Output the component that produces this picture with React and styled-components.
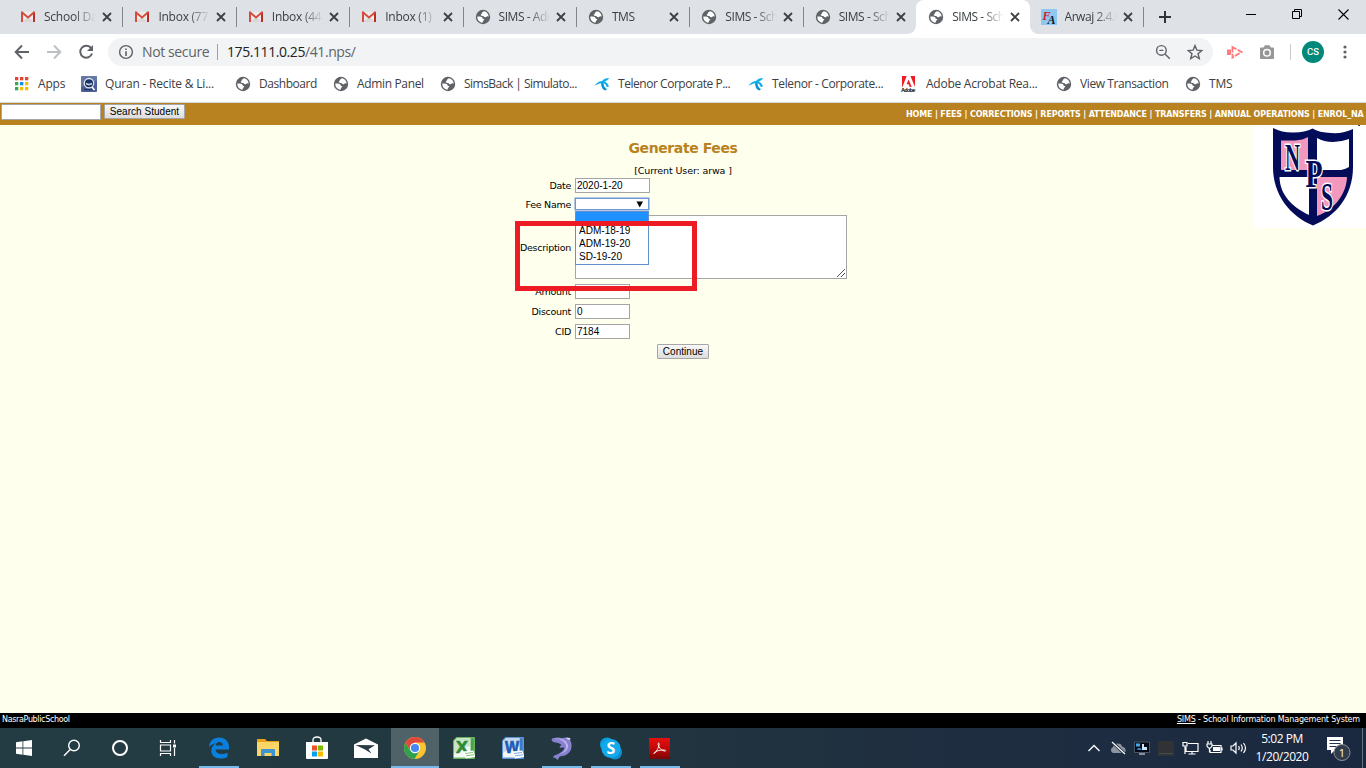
import React from 'react';
import styled, { createGlobalStyle, css } from 'styled-components';

const GlobalStyle = createGlobalStyle`
  * { box-sizing: border-box; }
  body { margin: 0; overflow: hidden; }
`;

const ui = '"Open Sans", "Noto Sans", sans-serif';
const verdana = 'Verdana, "DejaVu Sans", sans-serif';
const arial = '"Liberation Sans", Arial, sans-serif';

const Screen = styled.div`
  width: 1366px;
  height: 768px;
  display: flex;
  flex-direction: column;
  overflow: hidden;
  position: relative;
  background: #ffffee;
`;

/* ---------- tab strip ---------- */
const TabStrip = styled.div`
  height: 34px;
  flex: none;
  display: flex;
  padding-left: 9px;
  background: #dee1e6;
`;
const Tab = styled.div`
  width: 113.4px;
  flex: none;
  height: 34px;
  display: flex;
  align-items: center;
  padding: 0 10px 0 ${p => p.$pad}px;
  position: relative;
  ${p => p.$active ? css`
    background: #fff;
    border-radius: 8px 8px 0 0;
    &::before, &::after {
      content: '';
      position: absolute;
      bottom: 0;
      width: 8px;
      height: 8px;
    }
    &::before { left: -8px; background: radial-gradient(circle at 0 0, transparent 7.5px, #fff 8px); }
    &::after { right: -8px; background: radial-gradient(circle at 100% 0, transparent 7.5px, #fff 8px); }
  ` : ''}
`;
const TabSeparator = styled.i`
  position: absolute;
  right: -1px;
  top: 7px;
  width: 1px;
  height: 20px;
  background: #80868b;
`;
const TabTitle = styled.span`
  width: 52px;
  margin-left: 8px;
  overflow: hidden;
  white-space: nowrap;
  font: 12px/18px ${ui};
  letter-spacing: ${p => p.$ls || 0}px;
  color: #3c4043;
  -webkit-mask-image: linear-gradient(90deg, #000 58%, transparent 100%);
  mask-image: linear-gradient(90deg, #000 58%, transparent 100%);
`;
const TabClose = styled.svg`
  margin-left: 6px;
  flex: none;
`;
const IconBox = styled.span`
  width: 16px;
  height: 16px;
  flex: none;
  display: flex;
  align-items: center;
  justify-content: center;
`;
const NewTab = styled.svg`
  margin: 10px 0 0 15px;
  flex: none;
`;
const WindowButtons = styled.div`
  margin-left: auto;
  display: flex;
  align-items: flex-start;
  gap: 36px;
  padding: 9px 17px 0 0;
`;

/* ---------- toolbar ---------- */
const Toolbar = styled.div`
  height: 36px;
  flex: none;
  display: flex;
  align-items: center;
  background: #fff;
  padding-left: 14px;
`;
const NavIcons = styled.div`
  display: flex;
  gap: 16px;
  width: 94px;
`;
const Omnibox = styled.div`
  width: 1105px;
  height: 28px;
  border-radius: 14px;
  background: #f1f3f4;
  display: flex;
  align-items: center;
  padding: 0 10px 0 10px;
  font: 14px/20px ${ui};
  color: #5f6368;
`;
const Secure = styled.span`
  width: 68px;
  margin-left: 8px;
  white-space: nowrap;
  letter-spacing: -0.38px;
`;
const Bar = styled.i`
  width: 1px;
  height: 16px;
  margin: 0 9px 0 7px;
  background: #9aa0a6;
`;
const Url = styled.span`
  flex: 1;
  letter-spacing: -0.42px;
  b { font-weight: 400; color: #202124; }
`;
const OmniIcons = styled.span`
  display: flex;
  gap: 16px;
`;
const Extensions = styled.div`
  display: flex;
  align-items: center;
  padding-left: 13px;
  gap: 15px;
`;
const ExtDivider = styled.i`
  width: 1px;
  height: 16px;
  margin-right: -4px;
  background: #c6c9cd;
`;
const Avatar = styled.span`
  width: 22px;
  height: 22px;
  border-radius: 50%;
  background: #00897b;
  color: #fff;
  font: 500 9.5px/22px Roboto, sans-serif;
  text-align: center;
  margin-right: 4px;
`;

/* ---------- bookmarks ---------- */
const Bookmarks = styled.div`
  height: 33px;
  flex: none;
  display: flex;
  background: #fff;
  border-bottom: 1px solid #d5d8dc;
  padding: 0 0 4px 14px;
`;
const Bookmark = styled.div`
  width: ${p => p.$w}px;
  flex: none;
  display: flex;
  align-items: center;
  white-space: nowrap;
  font: 12px/18px ${ui};
  letter-spacing: ${p => p.$ls || 0}px;
  color: #3c4043;
  gap: ${p => p.$gap || 8}px;
`;

/* ---------- SIMS page ---------- */
const MenuBar = styled.div`
  height: 22px;
  flex: none;
  display: flex;
  background: #b98220;
  padding: 1px 0 0 1px;
`;
const Field = styled.div`
  width: ${p => p.$w}px;
  height: ${p => p.$h || 15}px;
  border: 1px solid #a5a5a5;
  background: #fff;
  padding: 0 1px;
  font: 10px/13px ${arial};
  color: #000;
`;
const Button = styled.button`
  width: ${p => p.$w}px;
  height: 15px;
  padding: 0;
  border: 1px solid #a6a6a6;
  border-radius: 1px;
  background: linear-gradient(#f8f8f8, #dddddd);
  font: 10px/13px ${arial};
  letter-spacing: ${p => p.$ls}px;
  color: #000;
`;
const SearchArea = styled.div`
  display: flex;
  gap: 3px;
`;
const MainMenu = styled.div`
  width: 460px;
  margin-left: auto;
  overflow: hidden;
  white-space: nowrap;
  padding-top: 4px;
  font: bold 8px/13px ${verdana};
  letter-spacing: -0.15px;
  color: #fff;
`;
const Page = styled.main`
  flex: 1;
  position: relative;
  padding-top: 14px;
`;
const School = styled.svg`
  position: absolute;
  right: 0;
  top: 0;
`;
const Title = styled.h1`
  margin: 0;
  text-align: center;
  font: bold 14px/18px ${verdana};
  letter-spacing: -0.4px;
  color: #b98220;
`;
const CurrentUser = styled.div`
  text-align: center;
  font: 9.5px/13px ${verdana};
  letter-spacing: -0.12px;
  margin-top: 7px;
`;
const Form = styled.div`
  display: grid;
  grid-template-columns: 51px 272px;
  grid-template-rows: 15px 12px 64px 15px 15px 15px;
  column-gap: 4px;
  row-gap: 5px;
  padding: 1px 0 0 520px;
`;
const Label = styled.label`
  align-self: center;
  justify-self: end;
  white-space: nowrap;
  font: 9.5px/13px ${verdana};
  letter-spacing: -0.28px;
`;
const SelectWrap = styled.div`
  position: relative;
  width: 74px;
`;
const SelectBox = styled.div`
  height: 12px;
  border: 1px solid #6d97d8;
  box-shadow: 0 0 0 0.5px #6d97d8;
  background: #fff;
  display: flex;
  justify-content: flex-end;
  align-items: center;
  padding-right: 4px;
`;
const Options = styled.div`
  position: absolute;
  z-index: 2;
  top: 13px;
  left: 0;
  width: 74px;
  height: 54px;
  border: 1px solid #6391cf;
  background: #fff;
  font: 10px/13px ${arial};
  letter-spacing: 0.02px;
`;
const Option = styled.div`
  height: 13px;
  padding-left: 3px;
  line-height: 12px;
  background: ${p => p.$on ? '#1e90ff' : '#fff'};
`;
const TextArea = styled.div`
  width: 272px;
  height: 64px;
  border: 1px solid #a5a5a5;
  background: #fff;
  display: flex;
  justify-content: flex-end;
  align-items: flex-end;
`;
const Submit = styled.div`
  display: flex;
  justify-content: center;
  padding-top: 5px;
`;
const Highlight = styled.div`
  position: absolute;
  z-index: 3;
  left: 515px;
  top: 96px;
  width: 182px;
  height: 70px;
  border: 5px solid #ed1c24;
`;
const Footer = styled.footer`
  height: 15px;
  flex: none;
  display: flex;
  justify-content: space-between;
  background: #000;
  color: #fff;
  padding: 0 6px 0 2px;
  font: 8px/13px ${verdana};
  span:first-child { letter-spacing: -0.34px; }
  span:last-child { letter-spacing: -0.17px; }
`;

/* ---------- taskbar ---------- */
const Taskbar = styled.div`
  height: 40px;
  flex: none;
  display: flex;
  background: linear-gradient(90deg, #233c43 0%, #22373f 40%, #1f2f40 65%, #1b2940 100%);
`;
const Task = styled.div`
  width: ${p => p.$w || 49}px;
  margin-left: ${p => p.$ml || 0}px;
  flex: none;
  display: flex;
  align-items: center;
  justify-content: center;
  background: ${p => p.$active ? '#4f6267' : 'transparent'};
  position: relative;
  &::after {
    content: '';
    display: ${p => p.$open ? 'block' : 'none'};
    position: absolute;
    bottom: 0;
    left: ${p => p.$active ? 0 : p.$inset || 5}px;
    right: ${p => p.$active ? 0 : p.$inset || 4}px;
    height: 2px;
    background: #76b9ed;
  }
`;
const Tray = styled.div`
  margin-left: auto;
  display: flex;
  align-items: center;
`;
const Clock = styled.div`
  width: 62px;
  margin-left: 1px;
  text-align: center;
  white-space: nowrap;
  font: 12px/18px ${ui};
  letter-spacing: -0.45px;
  color: #fff;
`;
const TrayIcon = styled.span`
  width: 24px;
  display: flex;
  justify-content: center;
`;
const Notify = styled.span`
  width: 46px;
  margin-left: 3px;
  display: flex;
  justify-content: center;
  padding-top: 6px;
`;
const ShowDesktop = styled.i`
  width: 4px;
  height: 40px;
  border-left: 1px solid #68727f;
`;

/* ---------- icons ---------- */
const Gmail = () => (
  <svg width="16" height="16" viewBox="0 0 16 16">
    <path d="M2 3h12v10H2z" fill="#eceaea" />
    <path d="M2 13l6-5 6 5z" fill="#d9d7d7" />
    <path d="M1 3.200C1 2.400 2 2 2.800 2.700L8 7.200l5.200-4.500C14 2 15 2.400 15 3.200V13h-2V5.400L8 9.800 3 5.400V13H1z" fill="#d54b3d" />
    <path d="M13 5.400L15 3.500V13h-2z" fill="#b63024" />
  </svg>
);
const Globe = () => (
  <svg width="16" height="16" viewBox="0 0 16 16">
    <circle cx="8" cy="8" r="7.200" fill="#5f6368" />
    <path d="M8.800 2.200C7.800 3 7 3.300 6.800 4.300c-.1.900-.9.900-1.100 1.700.2.900 1.500.8 2.400 1 .8.300.9 1 1.800 1.200 1.100.2 1.500-.8 2.500-1 .7-.1 1 .2 1.300.5C13.600 4.700 11.500 2.500 8.800 2.200zM2.300 7.600c.8 0 3.700 0 4.500.4.900.5.5 1.300 1.200 1.800.5.300 1.200.1 1.300.8 0 .8-.9.900-1.300 1.400-.4.600 0 1.300-.6 1.700C4.500 13.600 2.200 11.200 2.300 7.600z" fill="#fff" />
  </svg>
);
const Arwaj = () => (
  <svg width="16" height="16" viewBox="0 0 16 16">
    <rect width="16" height="16" fill="#8cc8f0" />
    <g fontFamily="Liberation Serif" fontStyle="italic" fontWeight="bold" fontSize="12">
      <text x="1.500" y="10.500" fill="#d4202a">F<tspan x="6.500" y="14.500" fill="#10182c">A</tspan></text>
    </g>
  </svg>
);
const AppsIcon = () => {
  const colors = ['#ea4335', '#ea4335', '#ea4335', '#34a853', '#1a88f0', '#fbbc05', '#34a853', '#fbbc05', '#fbbc05'];
  return (
    <svg width="16" height="16" viewBox="0 0 16 16">
      {colors.map((c, i) => <rect key={i} x={1 + (i % 3) * 5} y={1 + Math.floor(i / 3) * 5} width="3.300" height="3.300" fill={c} />)}
    </svg>
  );
};
const QuranIcon = () => (
  <svg width="16" height="16" viewBox="0 0 16 16">
    <rect width="16" height="16" rx="1" fill="#4b5f96" />
    <path d="M0 0h16v5L0 11z" fill="#7d8bb4" opacity=".55" />
    <path d="M3 13.500h8" stroke="#23376c" strokeWidth="1.500" />
    <circle cx="8" cy="7.200" r="4.700" fill="#1b3465" stroke="#dfe4ee" strokeWidth="1.300" />
    <path d="M5 6.800l3 1 3-1v1.800l-3 1-3-1z" fill="#c4ccda" />
    <path d="M11 11l2.500 3" stroke="#fff" strokeWidth="1.500" />
  </svg>
);
const Telenor = () => (
  <svg width="16" height="16" viewBox="0 0 16 16">
    <path d="M.3 9.800C2.800 6.600 5.300 5 8 5 9.500 3.200 11.800 2.200 15 2.100c-.3 1.500-2 2.300-4.200 3.700 2.200 1 4 2.700 3.900 4.600-.6.900-1.700.6-2.100 0-.6-1.500-1.600-2.500-3-3.200.2 2.700 1.400 4.600 3.200 5.900-.5 1.400-1.800 1.600-2.900.7C7.900 12.300 7.200 9.700 7.300 7.200 5 7.300 2.800 9 .3 9.800z" fill="#12aeea" />
    <path d="M8.700 7c.1 2.900 1.600 5.200 3.900 6.500-.7 1-1.800 1-2.700.3C8 12.300 7.300 9.700 7.400 7.100z" fill="#0a8fd0" />
  </svg>
);
const AdobeIcon = () => (
  <svg width="16" height="16" viewBox="0 0 16 16">
    <path d="M1 0h13v11H1z" fill="#ed1c24" />
    <path d="M5.700 0h3.700L14 11h-3.300L7.600 3.500 5.500 8.200h2.200L8.700 11H1.400z" fill="#fff" />
    <text x="0" y="15.800" fontFamily="Liberation Sans" fontWeight="bold" fontSize="5.500" textLength="14" fill="#000">Adobe</text>
  </svg>
);

const Stroke = ({ w = 20, sw = 1.8, color = '#5f6368', d, children }) => (
  <svg width={w} height={w} viewBox="0 0 20 20" fill="none" stroke={color} strokeWidth={sw}>
    {d && <path d={d} />}{children}
  </svg>
);

const crestLetters = [['N', 31, 45, 37, 15], ['P', 51.500, 62, 39, 17], ['S', 67, 85, 39, 12]];
const Shield = () => (
  <School width="112" height="103" viewBox="0 0 112 103">
    <path d="M0 0h112v103H0z" fill="#fff" />
    <path d="M19 3q10 5 21 4.500Q51 7.500 58.500 3.500 65 7.500 77 8 89 9 99 4v38c0 29-17 49-40 58.500C36 91 19 70 19 42V4z" fill="#020c58" />
    <path d="M27 15.500h14q8-.5 13-3.500v33H27z" fill="#f297bd" />
    <path d="M63 13q7 4 16 4 8 0 16-3v28q-3 2-8 3H63z" fill="#fff" />
    <path d="M25.500 52H55v38C38 82 26 70 25.500 52z" fill="#fff" />
    <path d="M63 52h30c-.5 17-13 33-30 39z" fill="#f297bd" />
    <g fontFamily="Liberation Serif, serif" fontWeight="bold" fill="#020c58" stroke="#fff" strokeWidth="3" paintOrder="stroke">
      {crestLetters.map(([t, x, y, size, w]) => (
        <text key={t} x={x} y={y} fontSize={size} textLength={w} lengthAdjust="spacingAndGlyphs">{t}</text>
      ))}
    </g>
    <path d="M104 0h2v1h-2z" fill="#444" />
  </School>
);

const Windows = () => (
  <svg width="16" height="16" viewBox="0 0 16 16" fill="#fff">
    <path d="M0 2.200L6.500 1.300v6.300H0zM7.300 1.200L16 0v7.600H7.300zM0 8.400h6.500v6.300L0 13.800zM7.300 8.400H16V16l-8.700-1.200z" />
  </svg>
);
const Edge = () => (
  <svg width="22" height="22" viewBox="0 0 22 22">
    <path d="M1 10C1.600 4 5.500.5 11 .5c6 0 10 4 10 9.500v2.500H7.500c.3 3 3 4.500 6 4.500 2.200 0 4.200-.6 6-1.600v4.500c-2 1.100-4.500 1.700-7.500 1.700-5.500 0-8.700-3.300-8.700-8 0-3.300 2-6 4.700-7.300C5.200 7 2.600 8 1 10zm6.600-1.400h7.200C14.800 6.200 13.500 5 11.300 5 9.300 5 7.900 6.400 7.600 8.600z" fill="#0a7fde" />
  </svg>
);
const Explorer = () => (
  <svg width="22" height="20" viewBox="0 0 22 20">
    <path d="M0 1h8l2 2h12v15H0z" fill="#e8a318" />
    <path d="M0 4h22v14H0z" fill="#fbd667" />
    <path d="M4 18v-6q0-1 1-1h12q1 0 1 1v6h-3.500v-3h-7v3z" fill="#3e93d2" />
  </svg>
);
const Store = () => (
  <svg width="24" height="24" viewBox="0 0 24 24">
    <path d="M8 7V4q0-3 4-3t4 3v3" fill="none" stroke="#fff" strokeWidth="1.300" />
    <path d="M1 6h22v16q0 1-1 1H2q-1 0-1-1z" fill="#fff" />
    <path d="M7 9.500h5v5H7z" fill="#f05024" /><path d="M13 9.500h5v5h-5z" fill="#7eb900" />
    <path d="M7 15.500h5v5H7z" fill="#00a3ee" /><path d="M13 15.500h5v5h-5z" fill="#feb800" />
  </svg>
);
const Mail = () => (
  <svg width="24" height="20" viewBox="0 0 24 20">
    <path d="M0 6.500L12 .5l12 6V20H0z" fill="#fff" />
    <path d="M1.500 7L21 7.300 14.500 11.200 17.500 15.500 11 11.500z" fill="#263b43" />
  </svg>
);
const Chrome = () => (
  <svg width="22" height="22" viewBox="0 0 22 22">
    <circle cx="11" cy="11" r="11" fill="#fbc52f" />
    <path d="M1.500 5.500A11 11 0 0 0 10.500 22l5-8.300L11 11 6 13.500z" fill="#2da14f" />
    <path d="M1.500 5.500A11 11 0 0 1 20.500 5.500H11L6 13.300z" fill="#e0483c" />
    <circle cx="11" cy="11" r="5.200" fill="#fff" /><circle cx="11" cy="11" r="4.100" fill="#4688f1" />
  </svg>
);
const Office = ({ letter, dark, light, w }) => (
  <svg width="22" height="22" viewBox="0 0 22 22">
    <path d="M3.500 0H21q1 0 1 1v20q0 1-1 1H1q-1 0-1-1V3.500z" fill={light} />
    <path d="M4 1h13.500v19.500H1V4z" fill="#f3f8f4" />
    <path d="M4 1h13.500v8Q10 10 1 16V4z" fill={light} opacity=".3" />
    <path d="M18 1.500h2.500v13H18z" fill={dark} opacity=".45" />
    <text x="3" y="15.500" fontFamily="Liberation Sans" fontWeight="bold" fontSize="17" textLength={w} lengthAdjust="spacingAndGlyphs" fill={dark} stroke={dark} strokeWidth=".7">{letter}</text>
    <path d="M9.500 14.500l11-1 2 6.500-9.500 1.500z" fill="#fff" />
    <path d="M12 16.500l8-1M13 18.800l8-1" stroke={light} strokeWidth=".8" />
  </svg>
);
const Dolphin = () => (
  <svg width="22" height="24" viewBox="0 0 22 24">
    <path d="M1 2.500Q7 .8 11 2 16 .8 19.500 2.200 18.500 4 20 6c1.500 5 .3 10-5 13-2.500 1.300-5 1-6.500 1.800L6.500 24 4.500 22 2 21.500q.5-2.500 4-3c4-1.700 7-4 7.500-7l-5 .3q0-1.500 2-3Q7 6 3 6.200 1 5.500.5 3.700z" fill="#8781cf" />
    <path d="M1 3.500C7 2 12 4 14.500 8c1.800 4-1 8-6 10.500 6-2 9-5 8.500-9.500C16 4.500 9 .8 1 3.500z" fill="#b9b5ec" />
    <path d="M14.500 2q3-.6 5 .2-1 1-.8 2z" fill="#dcdaf5" />
  </svg>
);
const Skype = () => (
  <svg width="22" height="23" viewBox="0 0 22 23">
    <circle cx="7" cy="7.500" r="7" fill="#0a9fe0" /><circle cx="15" cy="15.500" r="7" fill="#0a8fd6" />
    <circle cx="11" cy="11.500" r="9.600" fill="#12aaeb" />
    <text x="11" y="17.200" textAnchor="middle" fontFamily="Open Sans" fontWeight="bold" fontSize="16" fill="#fff">S</text>
  </svg>
);
const Acrobat = () => (
  <svg width="21" height="21" viewBox="0 0 21 21">
    <defs><linearGradient id="acro" x2="0" y2="1"><stop offset="0" stopColor="#e81010" /><stop offset=".5" stopColor="#c00808" /><stop offset="1" stopColor="#7c0505" /></linearGradient></defs>
    <rect width="21" height="21" fill="url(#acro)" />
    <path d="M5 15.500c1.500-.3 5-6 5.200-9.500 0-1.500-1.300-1.300-1.100.3.400 3 3.200 6.500 6.700 6.900 1.500 0 .9-1.300-.9-1.300-3.300 0-7.200.8-9.200 2.400-.9.700-1.200 1.300-.7 1.200z" fill="none" stroke="#fff" strokeWidth=".9" />
  </svg>
);

const tabs = [
  ['School Data', Gmail], ['Inbox (77)', Gmail], ['Inbox (44)', Gmail], ['Inbox (1)', Gmail],
  ['SIMS - Adm', Globe], ['TMS', Globe], ['SIMS - Sch', Globe], ['SIMS - Sch', Globe],
  ['SIMS - Sch', Globe, true], ['Arwaj 2.4.0', Arwaj],
];
const bookmarks = [
  ['Apps', AppsIcon, 67, -0.2], ['Quran - Recite & Li...', QuranIcon, 154, -0.2], ['Dashboard', Globe, 98, -0.45],
  ['Admin Panel', Globe, 107, -0.35], ['SimsBack | Simulato...', Globe, 154, -0.53], ['Telenor Corporate P...', Telenor, 154, -0.46],
  ['Telenor - Corporate...', Telenor, 153, -0.35], ['Adobe Acrobat Rea...', AdobeIcon, 155, -0.25, 9], ['View Transaction', Globe, 129, -0.4], ['TMS', Globe, 60, -0.2],
];

export default function App() {
  return (
    <Screen>
      <GlobalStyle />
      <TabStrip>
        {tabs.map(([title, Icon, active], i) => (
          <Tab key={i} $active={active} $pad={i > 0 && i < 9 ? 12 : 11}>
            <IconBox><Icon /></IconBox>
            <TabTitle $ls={i > 3 ? -0.45 : -0.25}>{title}</TabTitle>
            <TabClose width="10" height="10" viewBox="0 0 10 10"><path d="M1 1l8 8M9 1l-8 8" stroke="#3c4043" strokeWidth="1.800" /></TabClose>
            {!active && i !== 7 && <TabSeparator />}
          </Tab>
        ))}
        <NewTab width="14" height="14" viewBox="0 0 14 14"><path d="M7 1v12M1 7h12" stroke="#303336" strokeWidth="2" /></NewTab>
        <WindowButtons>
          <svg width="10" height="11"><path d="M0 5.500h10" stroke="#000" /></svg>
          <svg width="10" height="11" fill="none" stroke="#000"><path d="M.5 2.500h7v7h-7zM2.500 2.500v-2h7v7h-2" /></svg>
          <svg width="11" height="11"><path d="M.5.500l10 10M10.500.500l-10 10" stroke="#000" strokeWidth="1.100" /></svg>
        </WindowButtons>
      </TabStrip>
      <Toolbar>
        <NavIcons>
          <svg width="16" height="16" fill="none" stroke="#5f6368" strokeWidth="2"><path d="M15 8H2M8 1.500L1.700 8 8 14.500" /></svg>
          <svg width="16" height="16" fill="none" stroke="#bdc1c6" strokeWidth="2"><path d="M1 8h13M8 1.500L14.300 8 8 14.500" /></svg>
          <svg width="16" height="16" fill="none" stroke="#5f6368" strokeWidth="2"><path d="M13.200 4.200A6 6 0 1 0 14 9.500" /><path d="M15 1v6H9z" fill="#5f6368" stroke="none" /></svg>
        </NavIcons>
        <Omnibox>
          <Stroke w={16} sw={1.8}><circle cx="10" cy="10" r="8" /><path d="M10 9v6M10 5.500v2" strokeWidth="2" /></Stroke>
          <Secure>Not secure</Secure>
          <Bar />
          <Url><b>175.111.0.25</b>/41.nps/</Url>
          <OmniIcons>
            <Stroke w={16}><circle cx="8" cy="8" r="6" /><path d="M12.500 12.500l6 6M5.500 8h5" /></Stroke>
            <Stroke w={16} d="M10 2l2.400 5.700 6.100.5-4.700 4 1.500 6-5.300-3.200-5.300 3.200 1.500-6-4.700-4 6.100-.5z" />
          </OmniIcons>
        </Omnibox>
        <Extensions>
          <svg width="18" height="16" viewBox="0 0 18 16"><path d="M1 5.500h4v5.500H1z" fill="#ff7c7c" /><path d="M6.500 3v10.500L15.500 8z" fill="none" stroke="#ff7c7c" strokeWidth="1.900" strokeDasharray="5.500 1.200" /></svg>
          <svg width="16" height="16" viewBox="0 0 16 16"><path d="M1.500 4H5l1-2.200h4.500L11.500 4h3v10.500h-13z" fill="#979797" stroke="#979797" strokeWidth="1" strokeLinejoin="round" /><circle cx="8" cy="8.800" r="3.300" fill="none" stroke="#fff" strokeWidth="1.500" /></svg>
          <ExtDivider />
          <Avatar>CS</Avatar>
          <svg width="4" height="14" fill="#5f6368"><circle cx="2" cy="2" r="1.600" /><circle cx="2" cy="7" r="1.600" /><circle cx="2" cy="12" r="1.600" /></svg>
        </Extensions>
      </Toolbar>
      <Bookmarks>
        {bookmarks.map(([title, Icon, w, ls, gap], i) => (
          <Bookmark key={i} $w={w} $ls={ls} $gap={gap}><IconBox><Icon /></IconBox>{title}</Bookmark>
        ))}
      </Bookmarks>
      <MenuBar>
        <SearchArea><Field $w={100} $h={16} /><Button $w={81} $ls={0.03}>Search Student</Button></SearchArea>
        <MainMenu>HOME | FEES | CORRECTIONS | REPORTS | ATTENDANCE | TRANSFERS | ANNUAL OPERATIONS | ENROL_NA</MainMenu>
      </MenuBar>
      <Page>
        <Shield />
        <Title>Generate Fees</Title>
        <CurrentUser>[Current User: arwa ]</CurrentUser>
        <Form>
          <Label>Date</Label><Field $w={75}>2020-1-20</Field>
          <Label>Fee Name</Label>
          <SelectWrap>
            <SelectBox><svg width="8" height="7"><path d="M.5.500h6.500L3.750 6.500z" /></svg></SelectBox>
            <Options><Option $on /><Option>ADM-18-19</Option><Option>ADM-19-20</Option><Option>SD-19-20</Option></Options>
          </SelectWrap>
          <Label>Description</Label>
          <TextArea><svg width="10" height="10" stroke="#555"><path d="M1 9l8-8M5 9l4-4" /></svg></TextArea>
          <Label>Amount</Label><Field $w={55} />
          <Label>Discount</Label><Field $w={55}>0</Field>
          <Label>CID</Label><Field $w={55}>7184</Field>
        </Form>
        <Submit><Button $w={52} $ls={0.03}>Continue</Button></Submit>
        <Highlight />
      </Page>
      <Footer><span>NasraPublicSchool</span><span><u>SIMS</u> - School Information Management System</span></Footer>
      <Taskbar>
        <Task $w={48}><Windows /></Task>
        <Task $w={48}><svg width="18" height="18" fill="none" stroke="#fff" strokeWidth="1.400"><circle cx="11" cy="6.500" r="5.300" /><path d="M7.200 10.500L1 16.700" /></svg></Task>
        <Task $w={48}><svg width="18" height="18" fill="none" stroke="#fff" strokeWidth="2"><circle cx="9" cy="9" r="7" /></svg></Task>
        <Task $w={48}><svg width="18" height="16" fill="none" stroke="#fff" strokeWidth="1.200"><path d="M1.500 0v2.500h10V0M1.500 16v-2.500h10V16M1.500 5h10v6h-10zM15.500 0v3.500M15.500 8v8" /><path d="M14 4.500h3v3h-3z" fill="#fff" stroke="none" /></svg></Task>
        <Task $w={54} $open $inset={7}><Edge /></Task>
        <Task $w={44}><Explorer /></Task>
        <Task $w={53}><Store /></Task>
        <Task $w={46}><Mail /></Task>
        <Task $w={48} $ml={2} $active $open><Chrome /></Task>
        <Task><Office letter="X" dark="#2f8a35" light="#64b55c" w={12} /></Task>
        <Task><Office letter="W" dark="#1c5bb5" light="#5d93d8" w={14} /></Task>
        <Task $open><Dolphin /></Task>
        <Task $open><Skype /></Task>
        <Task $open><Acrobat /></Task>
        <Tray>
          <TrayIcon><svg width="14" height="8" fill="none" stroke="#fff" strokeWidth="1.400"><path d="M1.500 7L7 1.500 12.500 7" /></svg></TrayIcon>
          <TrayIcon><svg width="17" height="14"><path d="M3 12a3.200 3.200 0 0 1 0-6 5 5 0 0 1 9.500 0A3.200 3.200 0 0 1 14 12z" fill="#8d969f" /><path d="M2 1l13 12" stroke="#1d2c42" strokeWidth="3" /><path d="M2 1l13 12" stroke="#fff" strokeWidth="1.200" /></svg></TrayIcon>
          <TrayIcon><svg width="16" height="15"><path d="M.5 1h15v10.500H.5z" fill="#040a18" stroke="#4b5563" /><path d="M2 2.500h4v3H2z" fill="#4aa8e8" /><path d="M8 9V3h2v3h3v3z" fill="#cfe6f7" /><path d="M3 8q3-3 5 1H3z" fill="#2e7ec4" /><path d="M5 12h6v2H5z" fill="#87909b" /></svg></TrayIcon>
          <TrayIcon><svg width="16" height="15"><path d="M0 0h16v15H0z" fill="#303236" /><path d="M1 12.500h14" stroke="#4a4c50" /></svg></TrayIcon>
          <TrayIcon><svg width="17" height="14" fill="none" stroke="#fff" strokeWidth="1.200"><path d="M6 2.500h10v8H4V6M10 10.500v2.500M6.500 13h7M1 1.500h4v3.500H1zM3 5v8" /></svg></TrayIcon>
          <TrayIcon><svg width="17" height="14" fill="none" stroke="#fff" strokeWidth="1.200"><path d="M6 4.500h9v7H4V9M16 6.500v3M2 0v3M5 0v3M1 3h5v2L4.500 7h-2L1 5zM3.500 7v4" /><path d="M7 6h7v4H7z" fill="#fff" stroke="none" /></svg></TrayIcon>
          <TrayIcon><svg width="17" height="14" fill="none" stroke="#fff" strokeWidth="1.200"><path d="M1 5h2l3-3v10L3 9H1zM8.500 5q1.500 2 0 4M11 3.500q2.500 3.500 0 7M13.500 2q4 5 0 10" /></svg></TrayIcon>
          <Clock>5:02 PM<br />1/20/2020</Clock>
          <Notify><svg width="26" height="28"><path d="M1 0h16v13H9l-4 4v-4H1z" fill="#fff" /><path d="M3.500 3.500h11M3.500 6.500h11M3.500 9.500h7" stroke="#26344a" /><circle cx="16" cy="15.500" r="8" fill="#343b48" stroke="#8c929b" /><text x="16" y="19.500" textAnchor="middle" fontFamily="Open Sans" fontSize="11" fill="#fff">1</text></svg></Notify>
          <ShowDesktop />
        </Tray>
      </Taskbar>
    </Screen>
  );
}
